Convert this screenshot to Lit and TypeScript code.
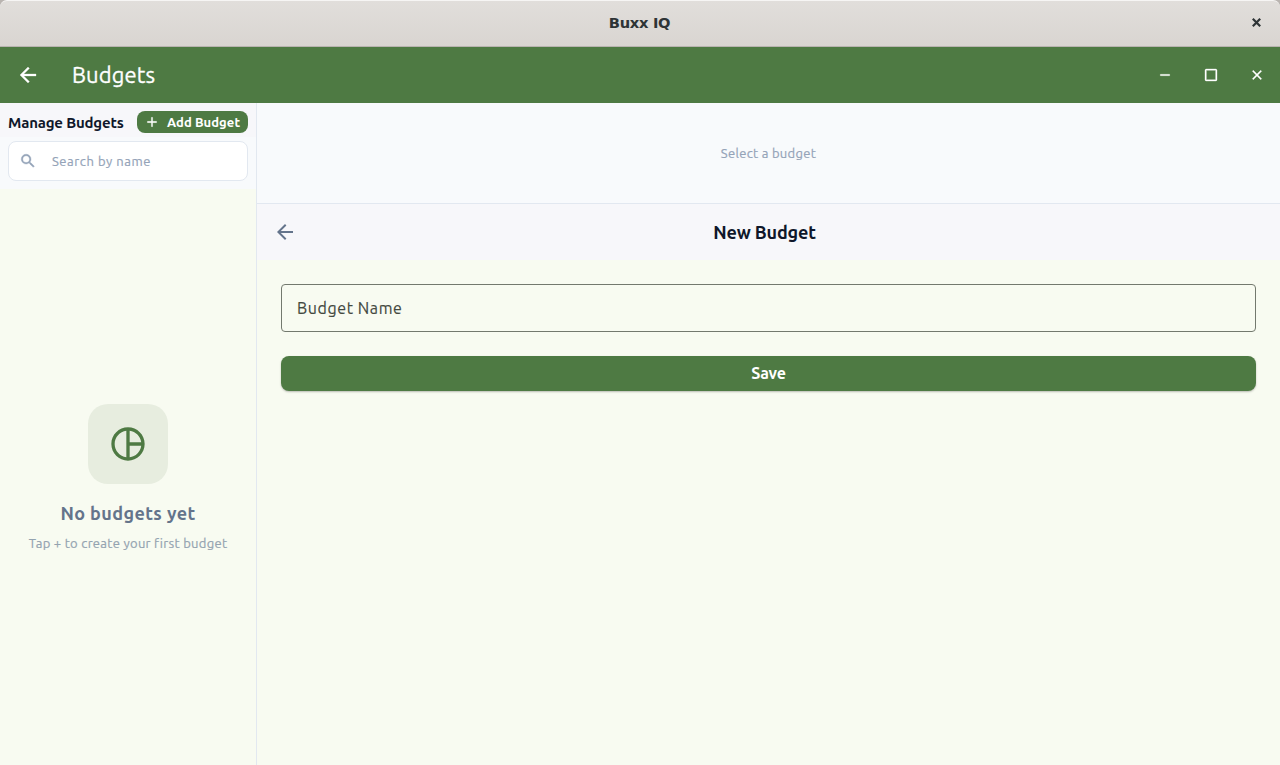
import { LitElement, html, css, svg } from "lit";
import { customElement } from "lit/decorators.js";

const ICONS = {
  back: "M20 11H7.83l5.59-5.59L12 4l-8 8 8 8 1.41-1.41L7.83 13H20v-2z",
  add: "M19 13h-6v6h-2v-6H5v-2h6V5h2v6h6v2z",
  search:
    "M15.5 14h-.79l-.28-.27A6.471 6.471 0 0 0 16 9.5 6.5 6.5 0 1 0 9.5 16c1.61 0 3.09-.59 4.23-1.57l.27.28v.79l5 4.99L20.49 19l-4.99-5zm-6 0C7.01 14 5 11.99 5 9.5S7.01 5 9.5 5 14 7.01 14 9.5 11.99 14 9.5 14z",
  minimize: "M19 13H5v-2h14v2z",
  maximize:
    "M19 3H5c-1.1 0-2 .9-2 2v14c0 1.1.9 2 2 2h14c1.1 0 2-.9 2-2V5c0-1.1-.9-2-2-2zm0 16H5V5h14v14z",
  close:
    "M19 6.41L17.59 5 12 10.59 6.41 5 5 6.41 10.59 12 5 17.59 6.41 19 12 13.41 17.59 19 19 17.59 13.41 12z",
  pie: "M12 2C6.48 2 2 6.48 2 12s4.48 10 10 10 10-4.48 10-10S17.52 2 12 2zm1 2.07c3.61.45 6.48 3.33 6.93 6.93H13V4.07zM4 12c0-4.06 3.07-7.44 7-7.93v15.87c-3.93-.5-7-3.88-7-7.94zm9 7.93V13h6.93c-.45 3.61-3.32 6.48-6.93 6.93z",
};

const icon = (name: keyof typeof ICONS, size: number) => html`<svg
  class="icon" width=${size} height=${size} viewBox="0 0 24 24" aria-hidden="true"
>${svg`<path d=${ICONS[name]}></path>`}</svg>`;

@customElement("app-root")
export class AppRoot extends LitElement {
  static styles = css`
    :host {
      display: flex;
      flex-direction: column;
      height: 100vh;
      overflow: hidden;
      background: #f8fbf1;
      color: #0f172a;
      font-family: Ubuntu, "Noto Sans", sans-serif;
      font-weight: 400;
      white-space: nowrap;
    }
    * { box-sizing: border-box; }
    .icon { display: block; fill: currentColor; flex: none; }

    .frame { height: 47px; flex: none; background: #b9b4b0; }
    .titlebar {
      display: grid;
      grid-template-columns: 46px 1fr 47px;
      align-items: center;
      justify-items: center;
      height: 46px;
      padding-bottom: 2px;
      border-top: 1px solid #f6f5f4;
      border-radius: 7px 7px 0 0;
      background: linear-gradient(#e1dedb, #d9d5d1);
      color: #2e3436;
    }
    .title {
      grid-column: 2;
      font: bold 14.67px/20px "DejaVu Sans", sans-serif;
      letter-spacing: -0.3px;
    }
    .frame-close { width: 9px; height: 9px; fill: none; stroke: currentColor; stroke-width: 2.2; }

    .appbar {
      display: flex;
      align-items: center;
      height: 56px;
      flex: none;
      padding: 0 15px 0 16px;
      background: #4e7a43;
      color: #fff;
    }
    .appbar .icon { stroke: currentColor; stroke-width: 0.3; }
    .appbar-title {
      flex: 1;
      margin-left: 32px;
      font-size: 22px;
      line-height: 28px;
      letter-spacing: 0.1px;
      -webkit-text-stroke: 0.3px currentColor;
    }
    .window-buttons { display: flex; gap: 30px; }
    .window-buttons .icon { stroke-width: 0.5; }

    .body { display: flex; flex: 1; min-height: 0; }
    .sidebar { display: flex; flex-direction: column; width: 257px; border-right: 1px solid #e2e8f0; }
    .side-head {
      display: flex;
      align-items: center;
      justify-content: space-between;
      height: 34px;
      padding: 4px 8px 0;
      background: #f7f7fa;
    }
    .side-title { font-size: 15px; font-weight: 600; letter-spacing: -0.18px; }
    .add {
      display: flex;
      align-items: center;
      gap: 7px;
      width: 111px;
      height: 22px;
      padding-left: 7px;
      border-radius: 8px;
      background: #4e7a43;
      color: #fff;
      font-size: 13px;
      font-weight: 700;
      letter-spacing: 0.06px;
    }
    .add .icon { stroke: currentColor; stroke-width: 0.3; }
    .search-area { padding: 4px 8px 8px; background: #f8fafc; }
    .search {
      display: flex;
      align-items: center;
      gap: 15px;
      height: 40px;
      padding-left: 10px;
      border: 1px solid #e2e8f0;
      border-radius: 8px;
      background: #fff;
      color: #94a3b8;
      font-size: 13px;
      letter-spacing: 0.55px;
      -webkit-text-stroke: 0.2px currentColor;
    }
    .search .icon { stroke: currentColor; stroke-width: 0.5; }
    .empty {
      display: flex;
      flex-direction: column;
      align-items: center;
      justify-content: center;
      flex: 1;
      padding-top: 2px;
    }
    .tile {
      display: grid;
      place-items: center;
      width: 80px;
      height: 80px;
      border-radius: 20px;
      background: #e7eddf;
      color: #4e7a43;
    }
    .empty-title {
      margin-top: 16px;
      color: #64748b;
      font-size: 18px;
      line-height: 26px;
      font-weight: 700;
      letter-spacing: 0.4px;
    }
    .empty-text {
      margin-top: 8px;
      color: #94a3b0;
      font-size: 13px;
      line-height: 18px;
      letter-spacing: 0.3px;
      -webkit-text-stroke: 0.2px currentColor;
    }

    .main { display: flex; flex-direction: column; flex: 1; min-width: 0; }
    .summary {
      display: grid;
      place-items: center;
      height: 101px;
      border-bottom: 1px solid #e2e8f0;
      background: #f8fafc;
      color: #94a3b8;
      font-size: 13px;
      letter-spacing: 0.3px;
      -webkit-text-stroke: 0.2px currentColor;
    }
    .page-head {
      display: grid;
      grid-template-columns: 40px 1fr 64px;
      align-items: center;
      height: 56px;
      padding-left: 16px;
      background: #f7f7fa;
    }
    .page-back { color: #64748b; }
    .page-title { text-align: center; font-size: 18px; font-weight: 600; letter-spacing: -0.15px; }
    .form { display: flex; flex-direction: column; gap: 24px; padding: 24px; }
    .field {
      display: flex;
      align-items: center;
      height: 48px;
      padding-left: 15px;
      border: 1px solid #73796e;
      border-radius: 4px;
      color: #43483f;
      font-size: 16px;
      letter-spacing: 0.6px;
      -webkit-text-stroke: 0.15px currentColor;
    }
    .save {
      display: grid;
      place-items: center;
      height: 35px;
      padding-bottom: 2px;
      border-radius: 8px;
      background: #4e7a43;
      box-shadow: 0 1px 2px rgba(0, 0, 0, 0.25);
      color: #fff;
      font-size: 16px;
      font-weight: 700;
      letter-spacing: -0.25px;
    }
  `;

  render() {
    return html`
      <div class="frame">
        <div class="titlebar">
          <span class="title">Buxx IQ</span>
          <svg class="frame-close" viewBox="0 0 9 9"><path d="M.8 .8l7.4 7.4M8.2 .8L.8 8.2"></path></svg>
        </div>
      </div>
      <header class="appbar">
        ${icon("back", 24)}
        <span class="appbar-title">Budgets</span>
        <div class="window-buttons">
          ${icon("minimize", 16)}${icon("maximize", 16)}${icon("close", 16)}
        </div>
      </header>
      <div class="body">
        <aside class="sidebar">
          <div class="side-head">
            <span class="side-title">Manage Budgets</span>
            <div class="add">${icon("add", 16)}<span class="add-label">Add Budget</span></div>
          </div>
          <div class="search-area">
            <div class="search">${icon("search", 18)}<span class="search-label">Search by name</span></div>
          </div>
          <div class="empty">
            <div class="tile">${icon("pie", 40)}</div>
            <div class="empty-title">No budgets yet</div>
            <div class="empty-text">Tap + to create your first budget</div>
          </div>
        </aside>
        <main class="main">
          <div class="summary"><span class="summary-label">Select a budget</span></div>
          <div class="page-head">
            <span class="page-back">${icon("back", 24)}</span>
            <span class="page-title">New Budget</span>
          </div>
          <div class="form">
            <div class="field"><span class="field-label">Budget Name</span></div>
            <div class="save"><span class="save-label">Save</span></div>
          </div>
        </main>
      </div>
    `;
  }
}
